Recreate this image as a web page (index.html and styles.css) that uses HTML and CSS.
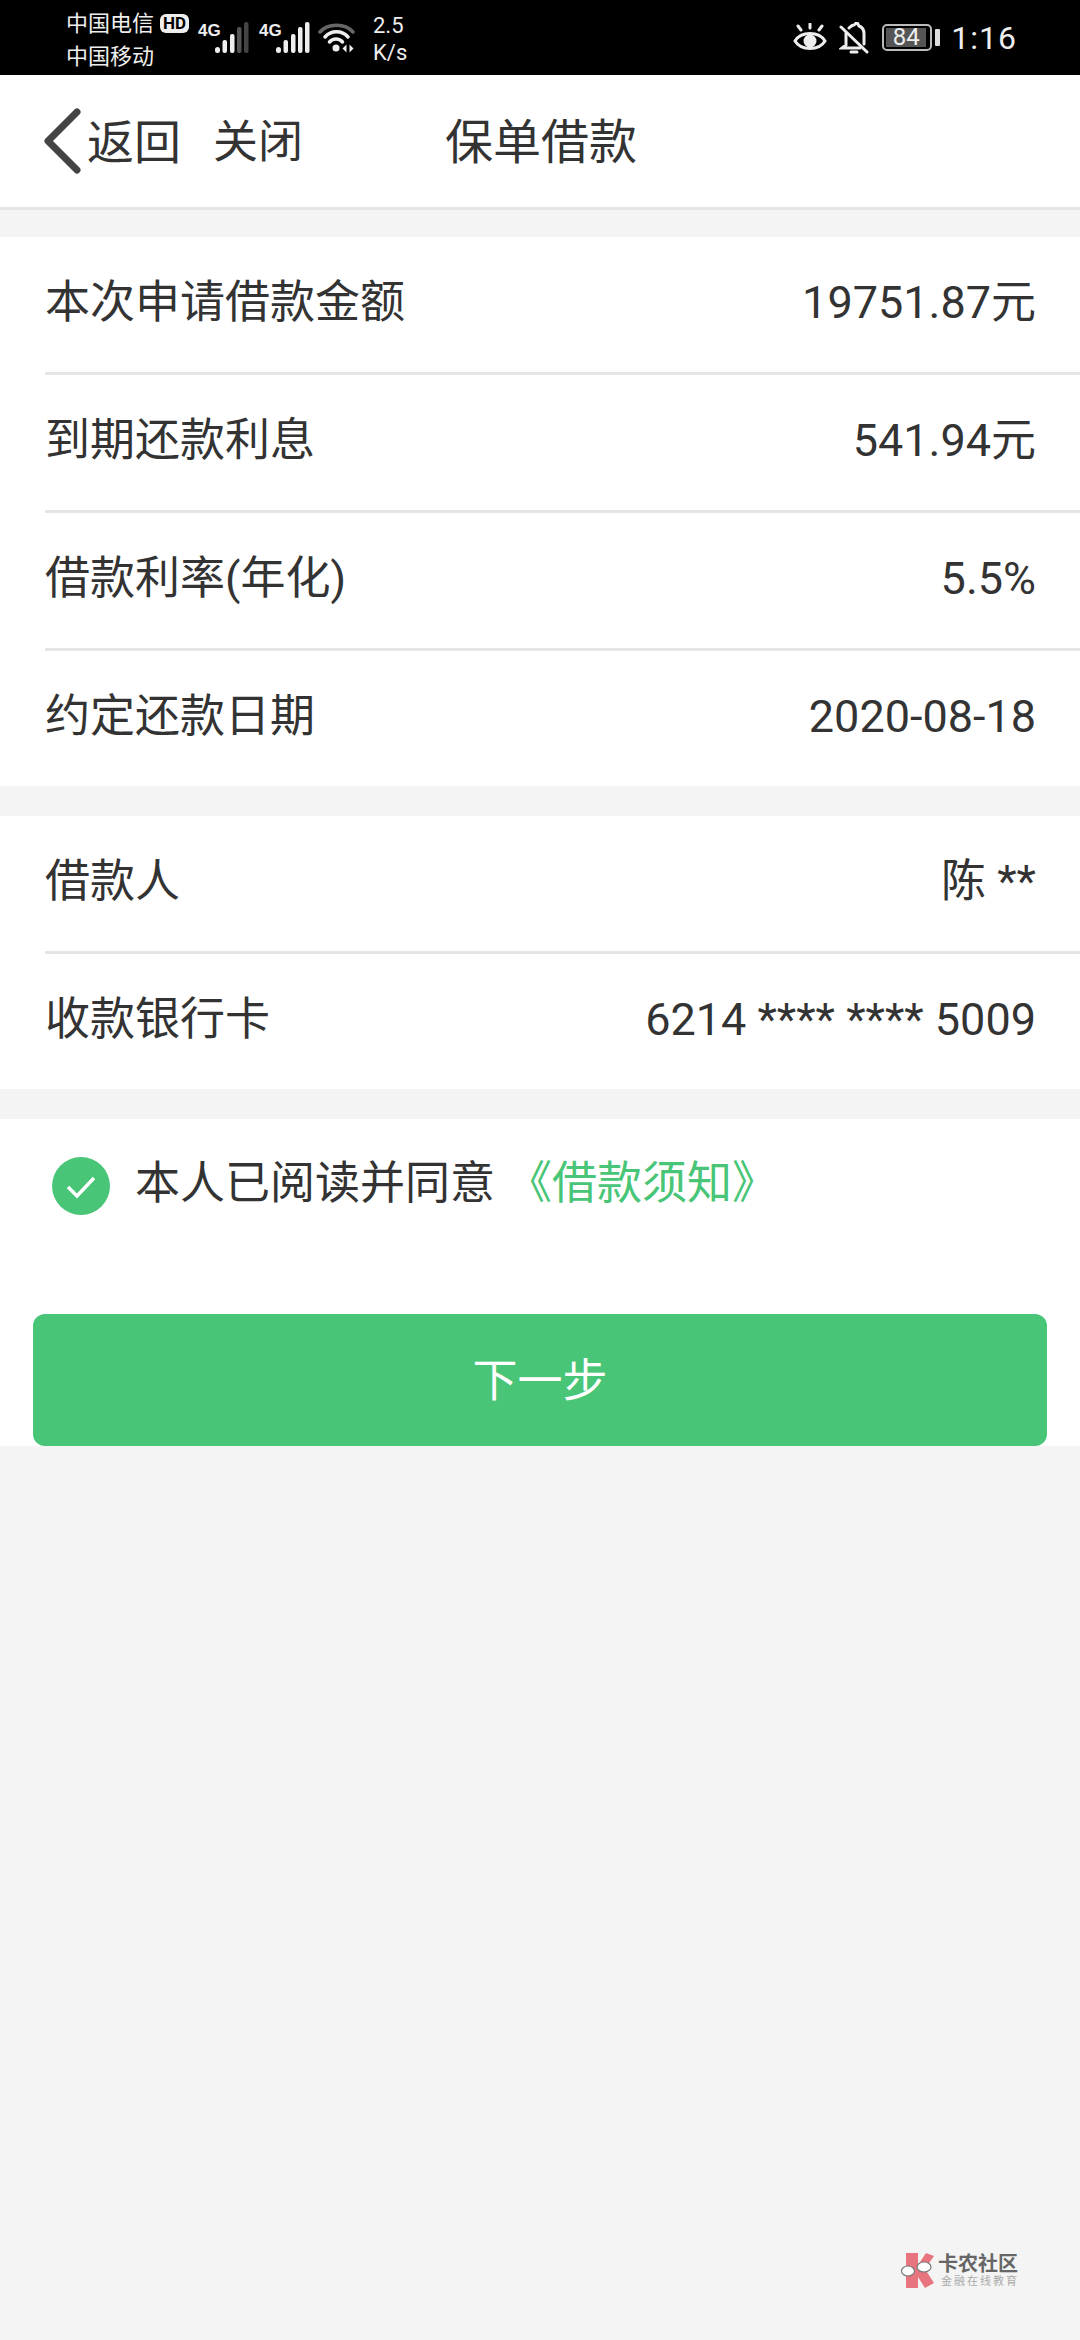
FILE: index.html
```html
<!DOCTYPE html>
<html>
<head>
  <title>保单借款</title>
  <link rel="stylesheet" href="styles.css">
</head>
<body>
  <div class="statusbar">
    <div class="status-left">
      <div class="carriers">
        <div class="carrier">中国电信<span class="hd">HD</span></div>
        <div class="carrier">中国移动</div>
      </div>
      <div class="signal">
        <span class="net">4G</span>
        <svg class="bars" width="34" height="32" viewBox="0 0 34 32">
          <rect x="0" y="25" width="5" height="6" rx="2.5" fill="#eee"/>
          <rect x="7.5" y="18" width="4.5" height="13" rx="2" fill="#eee"/>
          <rect x="15" y="12" width="4.5" height="19" rx="2" fill="#eee"/>
          <rect x="22" y="5" width="4.5" height="26" rx="2" fill="#555"/>
          <rect x="29" y="0" width="4.5" height="31" rx="2" fill="#444"/>
        </svg>
      </div>
      <div class="signal">
        <span class="net">4G</span>
        <svg class="bars" width="34" height="32" viewBox="0 0 34 32">
          <rect x="0" y="25" width="5" height="6" rx="2.5" fill="#eee"/>
          <rect x="7.5" y="18" width="4.5" height="13" rx="2" fill="#eee"/>
          <rect x="15" y="12" width="4.5" height="19" rx="2" fill="#eee"/>
          <rect x="22" y="5" width="4.5" height="26" rx="2" fill="#eee"/>
          <rect x="29" y="0" width="4.5" height="31" rx="2" fill="#eee"/>
        </svg>
      </div>
      <svg class="wifi" width="37" height="32" viewBox="0 0 37 32" fill="none" stroke-linecap="round">
        <path d="M2 10C10 1 27 1 35 10" stroke="#666" stroke-width="3.5"/>
        <path d="M7 15C13 8 24 8 30 15" stroke="#eee" stroke-width="3.5"/>
        <path d="M11.5 20C15 16 21 16 24.5 20" stroke="#eee" stroke-width="3.5"/>
        <circle cx="18" cy="26" r="3.5" fill="#eee"/>
        <path d="M28.500 22.500l-4 4 4 4zM31.500 22.500l4 4-4 4z" fill="#eee"/>
      </svg>
      <div class="speed"><div>2.5</div><div>K/s</div></div>
    </div>
    <div class="status-right">
      <svg class="eye" width="34" height="30" viewBox="0 0 34 30" fill="none" stroke="#eee" stroke-width="3" stroke-linecap="round">
        <path d="M2 18C8 8 26 8 32 18C26 28 8 28 2 18Z"/>
        <circle cx="17" cy="18" r="6.500" fill="#eee" stroke="none"/>
        <path d="M17 1v4M5 3l3 4M29 3l-3 4"/>
      </svg>
      <svg class="bell" width="30" height="32" viewBox="0 0 30 32" fill="none" stroke="#eee" stroke-width="3" stroke-linecap="round">
        <path d="M7 11v12l-4 3h18M10 6c2-2 3-3 5-3 1 0 1-2 3-2 1 0 1 2 2 3 3 1 5 4 5 8v10"/>
        <path d="M12 30h6"/>
        <path d="M2 5l26 25"/>
      </svg>
      <div class="battery">
        <div class="battery-box"><span class="battery-fill">84</span></div>
        <div class="battery-tip"></div>
      </div>
      <div class="clock">1:16</div>
    </div>
  </div>

  <div class="navbar">
    <svg class="back" width="40" height="70" viewBox="0 0 40 70" fill="none">
      <path d="M34 6L5 35L34 64" stroke="#444" stroke-width="7" stroke-linecap="round" stroke-linejoin="round"/>
    </svg>
    <span class="nav-back">返回</span>
    <span class="nav-close">关闭</span>
    <span class="nav-title">保单借款</span>
  </div>

  <div class="section section-first">
    <div class="row"><span>本次申请借款金额</span><span>19751.87元</span></div>
    <div class="row"><span>到期还款利息</span><span>541.94元</span></div>
    <div class="row"><span>借款利率(年化)</span><span>5.5%</span></div>
    <div class="row"><span>约定还款日期</span><span>2020-08-18</span></div>
  </div>

  <div class="section">
    <div class="row"><span>借款人</span><span>陈 **</span></div>
    <div class="row"><span>收款银行卡</span><span>6214 **** **** 5009</span></div>
  </div>

  <div class="section section-agree">
    <div class="agree">
      <svg class="check" width="58" height="58" viewBox="0 0 58 58">
        <circle cx="29" cy="29" r="29" fill="#48c576"/>
        <path d="M16 30l9 9 17-18" fill="none" stroke="#fff" stroke-width="3.500"/>
      </svg>
      <span class="agree-text">本人已阅读并同意</span>
      <span class="agree-text agree-link">《借款须知》</span>
    </div>
    <button class="next">下一步</button>
  </div>

  <div class="watermark">
    <svg width="33" height="35" viewBox="0 0 33 35">
      <path d="M5 0H17V12L25 0L33 3L24 16L33 30L24 35L17 24V35H5Z" fill="#e87480"/>
      <ellipse cx="7" cy="18" rx="6.500" ry="5" fill="#fff" stroke="#777" stroke-width="1.200"/>
      <ellipse cx="23" cy="14" rx="7" ry="5" fill="#fff" stroke="#777" stroke-width="1.200"/>
    </svg>
    <div class="wm-text">
      <div class="wm-name">卡农社区</div>
      <div class="wm-sub">金融在线教育</div>
    </div>
  </div>
</body>
</html>
```

FILE: styles.css
```css
* {
  box-sizing: border-box;
}

html, body {
  margin: 0;
  padding: 0;
}

body {
  width: 1080px;
  height: 2340px;
  overflow: hidden;
  position: relative;
  background-color: #f4f4f4;
  color: #333;
  font-family: Roboto, "Noto Sans CJK SC", sans-serif;
}

.statusbar {
  height: 75px;
  background-color: #000;
  color: #eee;
  display: flex;
  justify-content: space-between;
  align-items: center;
  padding: 0 63px 0 66px;
}

.status-left, .status-right {
  display: flex;
  align-items: center;
}

.carriers {
  font-size: 22px;
  line-height: 33px;
  width: 132px;
  padding-top: 4px;
}

.carrier {
  white-space: nowrap;
  display: flex;
  align-items: center;
}

.hd {
  width: 29px;
  height: 19px;
  background-color: #eee;
  color: #000;
  font-size: 17px;
  font-weight: 700;
  line-height: 19px;
  text-align: center;
  border-radius: 6px;
  margin-left: 6px;
}

.signal {
  display: flex;
  margin-right: 10px;
  height: 32px;
}

.net {
  width: 17px;
  font-family: "Liberation Sans Narrow", "Liberation Sans", sans-serif;
  font-size: 17px;
  font-weight: 700;
  line-height: 16px;
  margin-top: 1px;
}

.wifi {
  margin-left: -2px;
}

.speed {
  font-size: 22px;
  line-height: 27px;
  margin-left: 18px;
  padding-top: 2px;
}

.eye {
  margin-right: 12px;
}

.bell {
  margin-right: 13px;
}

.battery {
  display: flex;
  align-items: center;
  margin-right: 11px;
}

.battery-box {
  width: 50px;
  height: 27px;
  border: 2px solid #bbb;
  border-radius: 5px;
  padding: 2px;
  display: flex;
}

.battery-fill {
  width: 40px;
  background-color: #555;
  color: #eee;
  font-size: 24px;
  line-height: 19px;
  text-align: center;
}

.battery-tip {
  width: 5px;
  height: 17px;
  background-color: #ddd;
  margin-left: 3px;
  border-radius: 1px;
}

.clock {
  font-size: 32px;
  letter-spacing: 1px;
}

.navbar {
  height: 135px;
  background-color: #fff;
  border-bottom: 3px solid #e5e5e5;
  display: flex;
  align-items: center;
  padding: 0 0 6px 43px;
}

.back {
  margin: 5px 4px 0 0;
}

.nav-back {
  font-size: 47px;
}

.nav-close {
  font-size: 45px;
  margin-left: 32px;
}

.nav-title {
  font-size: 48px;
  margin-left: 142px;
}

.section {
  background-color: #fff;
  margin-top: 30px;
  padding-left: 45px;
}

.section-first {
  margin-top: 27px;
}

.row {
  height: 138px;
  display: flex;
  justify-content: space-between;
  align-items: baseline;
  padding: 29px 44px 0 0;
  font-size: 45px;
  border-bottom: 3px solid #e5e5e5;
}

.row:last-child {
  height: 135px;
  border-bottom: none;
}

.section-agree {
  padding-left: 0;
  height: 327px;
}

.agree {
  display: flex;
  align-items: center;
  height: 134px;
  padding-left: 52px;
  font-size: 45px;
}

.check {
  margin-right: 25px;
}

.agree-text {
  padding-bottom: 14px;
}

.agree-link {
  color: #48c576;
  margin-left: 12px;
}

.next {
  display: block;
  width: 1014px;
  height: 132px;
  margin: 61px 0 0 33px;
  padding-bottom: 6px;
  background-color: #48c576;
  color: #fff;
  border: none;
  border-radius: 12px;
  font-family: "Noto Sans CJK SC", sans-serif;
  font-size: 45px;
}

.watermark {
  position: absolute;
  left: 901px;
  top: 2253px;
  display: flex;
  align-items: center;
  gap: 4px;
}

.wm-name {
  font-size: 20px;
  font-weight: 700;
  line-height: 22px;
  color: #666;
  white-space: nowrap;
}

.wm-sub {
  font-size: 11px;
  line-height: 13px;
  color: #aaa;
  letter-spacing: 2px;
  padding-left: 3px;
  white-space: nowrap;
}
```
